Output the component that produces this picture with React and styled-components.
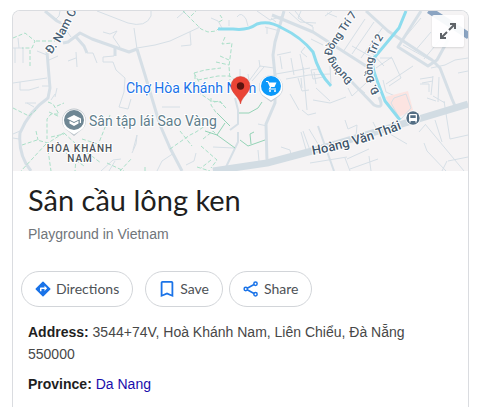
import React from "react";
import styled, { createGlobalStyle } from "styled-components";

const GlobalStyle = createGlobalStyle`
  * { box-sizing: border-box; }
  body {
    margin: 0;
    background: #fff;
    color: #1f1f1f;
    font-family: "Liberation Sans", Arial, sans-serif;
    font-size: 14px;
  }
`;

const Page = styled.main`
  display: flex;
  min-height: 100vh;
  padding: 10px 14px 0 12px;
`;

const Card = styled.article`
  flex: 1;
  min-width: 0;
  border: 1px solid #dadce0;
  border-bottom: 0;
  border-radius: 8px 8px 0 0;
  overflow: hidden;
`;

const MapFrame = styled.div`
  position: relative;
  height: 160px;
  background: #f5f3f4;
`;

const MapSvg = styled.svg`
  display: block;
  width: 100%;
  height: 100%;
`;

const RoadPath = styled.path`
  fill: none;
  stroke: ${(p) => p.$color || "#d6dfe6"};
  stroke-width: ${(p) => p.$width || 1};
  stroke-linejoin: round;
  stroke-dasharray: ${(p) => (p.$dashed ? "4 2" : "none")};
`;

const MapLabel = styled.text`
  font-family: Roboto, sans-serif;
  font-size: ${(p) => p.$size || 14}px;
  font-weight: ${(p) => p.$weight || 400};
  fill: ${(p) => p.$color};
  stroke: #fff;
  stroke-width: 2px;
  stroke-linejoin: round;
  paint-order: stroke;
`;

const DistrictLabel = styled(MapLabel)`
  letter-spacing: 1px;
  text-anchor: middle;
`;

const ExpandButton = styled.button`
  position: absolute;
  top: 4px;
  right: 4px;
  display: grid;
  place-items: center;
  width: 32px;
  height: 32px;
  padding: 0;
  border: 0;
  border-radius: 2px;
  background: rgba(255, 255, 255, 0.92);
  box-shadow: 0 1px 2px rgba(0, 0, 0, 0.12);
  cursor: pointer;
`;

const Header = styled.header`
  padding: 9px 15px 0;
`;

const Title = styled.h1`
  margin: 0;
  font-family: "Google Sans", Lato, sans-serif;
  font-size: 29px;
  font-weight: 400;
  line-height: 40px;
`;

const Category = styled.p`
  margin: 3px 0 0;
  color: #70757a;
  line-height: 22px;
`;

const Actions = styled.div`
  display: flex;
  flex-wrap: wrap;
  gap: 12px;
  padding: 26px 8px 0;
`;

const ActionPair = styled.div`
  display: flex;
  gap: 6px;
`;

const ActionButton = styled.button`
  display: flex;
  align-items: center;
  gap: 4px;
  height: 36px;
  padding: 0 13px 0 12px;
  border: 1px solid #d2d5d9;
  border-radius: 18px;
  background: #fff;
  color: #4d5156;
  font-family: "Google Sans", Lato, sans-serif;
  font-size: 14px;
  line-height: 20px;
  cursor: pointer;
`;

const Facts = styled.div`
  display: grid;
  gap: 8px;
  padding: 14px 15px 0;
`;

const Fact = styled.p`
  margin: 0;
  color: #474747;
  line-height: 22px;
`;

const FactLabel = styled.strong`
  color: #1f1f1f;
`;

const FactLink = styled.a`
  color: #1a0dab;
  text-decoration: none;
`;

const thinRoads = [
  "M60 11 59 16 56 19", "M97 11 128 23Q146 28 151 16V11", "M137 48 155 45 170 41 200 27",
  "M137 49 134 28", "M103 32 110 34 117 31 113 37 120 47", "M87 53 93 53 97 63",
  "M76 52 77 67M68 61 76 58", "M114 56 103 57V62L113 62 116 70 125 78 124 92 119 107 128 109 131 99",
  "M61 23 71 37", "M13 48H24M15 48V63M23 48V63M18 38 19 48", "M37 51 47 55M49 60 58 56",
  "M13 83 47 78M20 82V90L29 90 39 87M42 86H49M57 88 55 97", "M36 103 25 103M27 103 34 107M13 134 20 131M13 138 19 139M51 100 55 94",
  "M137 135 136 144 132 153M137 135 133 150", "M101 171 113 160 121 159M109 171 115 161",
  "M190 32 191 45 181 46M177 18 185 11M183 11 187 15", "M211 18 218 21 222 28M229 20V26", "M237 17Q241 11 246 19L248 26",
  "M162 107 180 107M157 171 162 161 174 153M186 165 194 161 196 153M213 147 234 148",
  "M240 69 240 80M248 74 249 81 260 66 274 68M259 60 260 67", "M252 81 264 67M234 82 237 94",
  "M267 27V34M277 55 291 52M280 56 282 69M291 58 294 75M300 54 304 73M276 74 310 68",
  "M257 11 270 20 283 16M271 18 276 22M265 27 280 31", "M295 11 304 22 313 26M301 11 298 18 313 27V31",
  "M289 12 300 22 316 23M325 16 332 11M327 13 337 17", "M305 47 301 52 307 57M311 39 323 45",
  "M286 79 309 75 330 74M298 78 302 91 309 90M303 67 307 110M316 88 330 101M314 72 316 84",
  "M330 66 331 85M318 69 311 70 313 79 323 77M301 78 302 88M313 100 330 103 346 97M302 110 308 115 316 113",
  "M352 46 377 60M343 52 365 19M352 54 374 22M361 58 383 27M368 49 384 66", "M380 58 392 58 401 78 389 86M376 68 392 57",
  "M413 66 386 84", "M401 42 421 18M414 52 431 32M424 59 440 40M403 45 430 60",
  "M431 68 445 65 455 60 468 58", "M420 79 433 77M422 83 433 81M433 76 431 95M439 77 438 102",
  "M433 96 445 103M458 73 468 71", "M348 88 352 96 366 83M355 85 365 93",
  "M383 80 386 92 395 96M420 84H429V92M427 98 436 101M444 101 450 139 468 135",
  "M425 124 464 171M435 120 442 142M448 161 468 157M447 161 442 171M419 132 425 125",
  "M424 143 427 151 446 171M390 134 407 144M373 122 378 132M345 120 348 129 357 125 356 137",
  "M347 159 369 149M310 163 347 157M345 158 350 171M369 156 371 171M350 169 378 159M303 131 311 153M309 129 321 149",
  "M258 150 259 161M281 147 290 150 292 160M301 132 307 153M258 124 267 126M290 94 299 110"
];

const mediumRoads = [
  "M45 11 57 21 61 23", "M63 43 68 42 80 33 92 39 129 52 137 49", "M76 37 84 46 87 53",
  "M137 49 145 75 151 95 160 125 170 148 182 171", "M115 48V56",
  "M47 52 50 88 48 98Q29 111 20 133Q18 155 31 171", "M284 11 275 42 273 55 275 75V103L266 124 267 162",
  "M272 15 313 32 366 66", "M366 11 388 31 432 60 440 68 452 99 455 106", "M421 11 398 47 428 66 437 60 448 40",
  "M350 80 374 105Q385 110 379 97"
];

const softRoads = [
  "M235 98 238 110 238 124 230 130M238 132V142L226 167", "M318 126 334 171"
];

const trails = [
  "M13 38 25 33 35 41 32 48H22", "M36 41H55", "M30 50V67", "M48 102 53 104 59 114H51L47 119V139M49 112 60 117",
  "M57 106 64 103M51 137 64 134", "M13 108 29 116 36 110M36 131 38 140M22 145 37 140 48 143 65 132",
  "M46 144 21 171M64 133 77 145 101 163M76 158 75 171M48 150 51 171M110 115 98 145",
  "M82 139 101 145M66 153 84 166M107 163 124 171M120 171 132 158M145 167V171",
  "M183 11 201 29 208 32 216 31 220 27M191 16 196 11M220 15 222 18M219 22 224 19",
  "M225 37 222 44 232 43 229 66 230 80M220 56 229 60M216 62 229 65",
  "M194 73 199 82M194 73 205 70 221 68M198 80 218 76 230 76 238 83M195 75V90L211 101 220 102 227 109",
  "M170 149 190 135 196 132 205 126M180 131 192 146M203 139 213 131 218 136M211 160 201 168M201 146 217 160 211 168M197 167 210 171",
  "M211 98V105L217 114M214 102 220 101 225 107"
];

const greenRoads = ["M225 123 217 135 205 131M217 135 235 148M217 113 230 126", "M239 113 249 113 258 108 262 102", "M240 140 248 146 265 140M251 144 250 134 254 132"];

function PlaceMap() {
  return (
    <MapSvg viewBox="13 11 455 160" preserveAspectRatio="xMidYMid slice" role="img" aria-label="Map of Hòa Khánh Nam">
      <defs>
        <path id="nam-cao" d="M48 52 57 40Q66 25 82 -10" />
        <path id="dong-tri-7" d="M350 83 339 72Q324 57 330 47L364 -3" />
        <path id="dong-tri-2" d="M376 94Q357 62 387 26" />
        <path id="hoang-van-thai" d="M312 151Q358 143 408 122" />
      </defs>
      {thinRoads.map((d) => <RoadPath key={d} d={d} />)}
      {softRoads.map((d) => <RoadPath key={d} d={d} $width={2} />)}
      {mediumRoads.map((d) => <RoadPath key={d} d={d} $width={3} />)}
      {trails.map((d) => <RoadPath key={d} d={d} $color="#aadfc8" $dashed />)}
      {greenRoads.map((d) => <RoadPath key={d} d={d} $color="#94d3b6" />)}
      <path d="M385 97 408 91 413 110 397 118Z" fill="#fce4e1" />
      <RoadPath d="M400 119 391 103 394 98 406 94 411 108 401 119" />
      <RoadPath d="M218 29 233 29Q247 31 257 24 269 20 282 28 301 37 313 52 319 74 331 86" $color="#8ddcee" $width={3} />
      <RoadPath d="M406 11 399 28 374 58Q370 63 378 83L385 101 400 120" $color="#8ddcee" $width={3} />
      <RoadPath d="M213 171 267 163 312 151 402 124 468 104" $color="#d2dce3" $width={7} />
      <RoadPath d="M429 10 469 36" $color="#8ba4c2" $width={7} />

      <MapLabel $size={12} $weight={500} $color="#4b6175" dy="4"><textPath href="#nam-cao">Đ. Nam Cao</textPath></MapLabel>
      <MapLabel $size={11} $weight={500} $color="#4b6175" dy="4"><textPath href="#dong-tri-7">Đường Đồng Trí 7</textPath></MapLabel>
      <MapLabel $size={11} $weight={500} $color="#4b6175" dy="4"><textPath href="#dong-tri-2">Đ. Đồng Trí 2</textPath></MapLabel>
      <MapLabel $size={13} $weight={500} $color="#3f566b" dy="4"><textPath href="#hoang-van-thai">Hoàng Văn Thái</textPath></MapLabel>
      <MapLabel x="126" y="93" $color="#1a73e8">Chợ Hòa Khánh Nam</MapLabel>
      <MapLabel x="89" y="126" $color="#607d8b">Sân tập lái Sao Vàng</MapLabel>
      <DistrictLabel x="80" y="152" $size={10} $weight={500} $color="#4b5258">HÒA KHÁNH</DistrictLabel>
      <DistrictLabel x="80" y="162" $size={10} $weight={500} $color="#4b5258">NAM</DistrictLabel>

      <path d="M74 136 68 131A12 12 0 1 1 80 131Z" fill="#bcc4ca" />
      <path d="M74 134.5 67 130A11.5 11.5 0 1 1 81 130Z" fill="#fff" />
      <circle cx="74" cy="120" r="10" fill="#6f8794" />
      <path d="M67 118.5 74 115 81 118.5V123H79.800V119.2L74 122Z" fill="#fff" />
      <path d="M69.5 120.8 74 123 78.5 120.8V123.4L74 126 69.5 123.4Z" fill="#fff" />

      <path d="M271 102 264 97A12 12 0 1 1 278 97Z" fill="#c6ced6" />
      <path d="M271 100.5 264 96A11.5 11.5 0 1 1 278 96Z" fill="#fff" />
      <circle cx="271" cy="86" r="10" fill="#0b99fa" />
      <path d="M266 81.5H268L270.5 87 269.5 89H276" fill="none" stroke="#fff" strokeWidth="1.2" />
      <path d="M268.5 82.5H276.5L274.5 87H270.5Z" fill="#fff" />
      <circle cx="270" cy="91" r="1" fill="#fff" />
      <circle cx="275" cy="91" r="1" fill="#fff" />

      <path d="M240.5 104C239.5 97 231 93 231 86A9.5 9.5 0 0 1 250 86C250 93 241.5 97 240.5 104Z" fill="#ea4335" stroke="#d23a2f" strokeWidth=".5" />
      <circle cx="240.5" cy="86" r="3.7" fill="#5c1410" />

      <circle cx="413" cy="118" r="7.5" fill="#fff" />
      <circle cx="413" cy="118" r="6.7" fill="#546e84" />
      <path d="M410 114H416Q417 114 417 115V121H409V115Q409 114 410 114Z" fill="#fff" />
      <path d="M410.3 115.3H415.7V118H410.3Z" fill="#546e84" />
      <path d="M410 121V122.5M416 121V122.5" stroke="#fff" strokeWidth="1.2" />
    </MapSvg>
  );
}

const ExpandIcon = () => (
  <svg width="18" height="18" viewBox="0 0 18 18" fill="none" stroke="#5f6368" strokeWidth="2" aria-hidden="true">
    <path d="M11 2H16V7M16 2 10 8M2 11V16H7M2 16 8 10" />
  </svg>
);

const DirectionsIcon = () => (
  <svg width="18" height="18" viewBox="0 0 24 24" fill="#1a73e8" aria-hidden="true">
    <path d="m21.710 11.290-9-9a1 1 0 0 0-1.410 0l-9 9a1 1 0 0 0 0 1.410l9 9c.39.39 1.020.39 1.410 0l9-9a1 1 0 0 0 0-1.410zM14 14.5V12h-4v3H8v-4c0-.55.45-1 1-1h5V7.5l3.5 3.5-3.5 3.5z" />
  </svg>
);

const SaveIcon = () => (
  <svg width="18" height="20" viewBox="2 1 20 22" fill="#1a73e8" aria-hidden="true">
    <path d="M17 3H7c-1.1 0-2 .9-2 2v16l7-3 7 3V5c0-1.1-.9-2-2-2zm0 15-5-2.18L7 18V5h10v13z" />
  </svg>
);

const ShareIcon = () => (
  <svg width="18" height="18" viewBox="0 0 24 24" fill="none" stroke="#1a73e8" strokeWidth="2" aria-hidden="true">
    <circle cx="18" cy="5" r="2.2" />
    <circle cx="5" cy="12" r="2.2" />
    <circle cx="18" cy="19" r="2.2" />
    <path d="m7 11 9-5M7 13l9 5" />
  </svg>
);

export default function App() {
  return (
    <>
      <GlobalStyle />
      <Page>
        <Card>
          <MapFrame>
            <PlaceMap />
            <ExpandButton type="button" aria-label="Expand map"><ExpandIcon /></ExpandButton>
          </MapFrame>
          <Header>
            <Title>Sân cầu lông ken</Title>
            <Category>Playground in Vietnam</Category>
          </Header>
          <Actions>
            <ActionButton type="button"><DirectionsIcon />Directions</ActionButton>
            <ActionPair>
              <ActionButton type="button"><SaveIcon />Save</ActionButton>
              <ActionButton type="button"><ShareIcon />Share</ActionButton>
            </ActionPair>
          </Actions>
          <Facts>
            <Fact><FactLabel>Address:</FactLabel> 3544+74V, Hoà Khánh Nam, Liên Chiểu, Đà Nẵng 550000</Fact>
            <Fact><FactLabel>Province:</FactLabel> <FactLink href="#da-nang">Da Nang</FactLink></Fact>
          </Facts>
        </Card>
      </Page>
    </>
  );
}
